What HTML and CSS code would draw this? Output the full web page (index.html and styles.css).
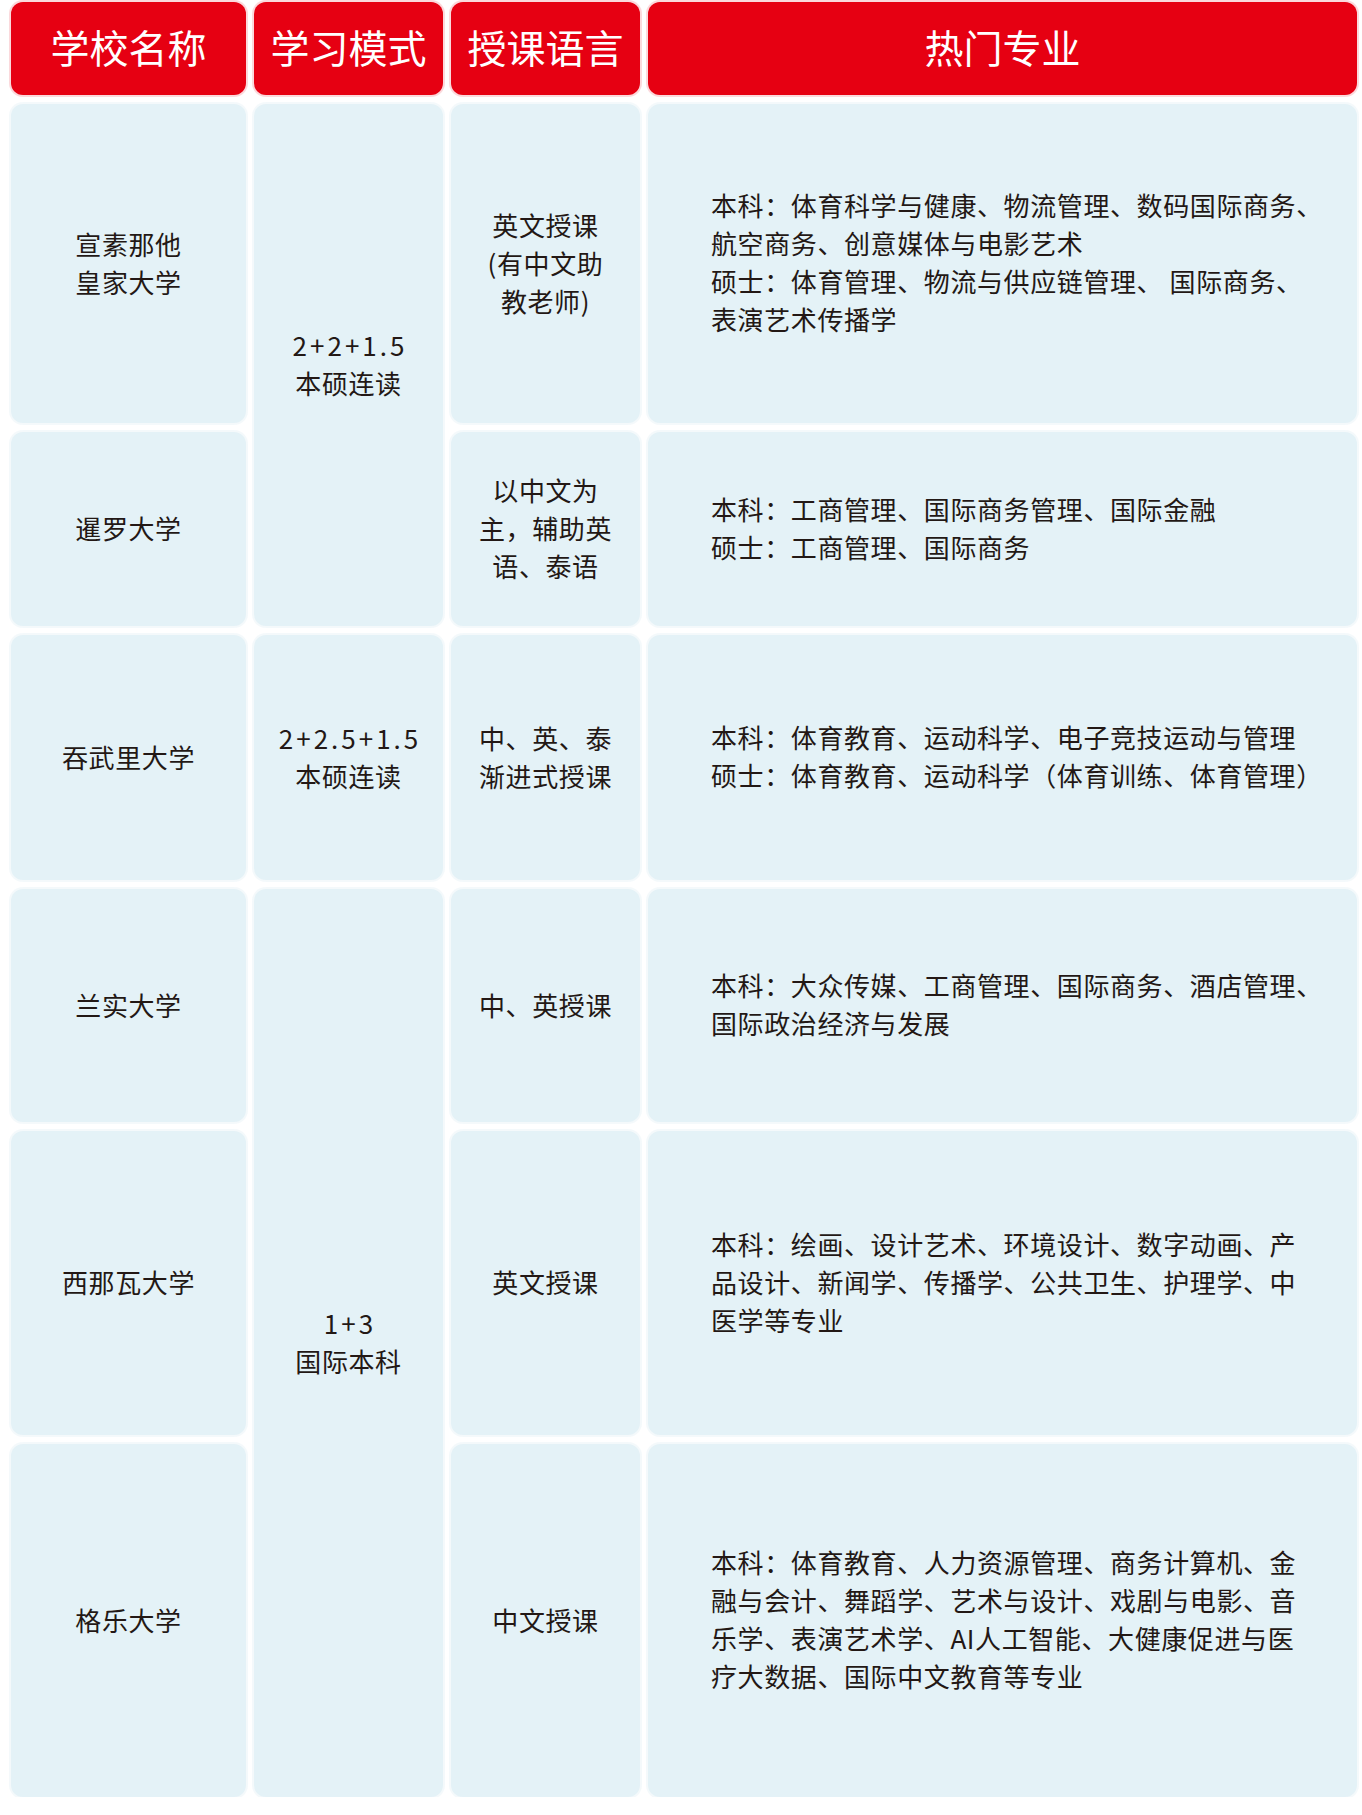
FILE: index.html
```html
<!DOCTYPE html>
<html lang="zh-CN">
<head>
<meta charset="utf-8">
<title>热门院校</title>
<link rel="stylesheet" href="styles.css">
</head>
<body>
<div class="table">
  <div class="cell head"><div>学校名称</div></div>
  <div class="cell head"><div>学习模式</div></div>
  <div class="cell head"><div>授课语言</div></div>
  <div class="cell head"><div>热门专业</div></div>

  <div class="cell c r1"><div>宣素那他<br>皇家大学</div></div>
  <div class="cell c r1-2"><div><span class="num">2+2+1.5</span><br>本硕连读</div></div>
  <div class="cell c r1"><div>英文授课<br>(有中文助<br>教老师)</div></div>
  <div class="cell l r1"><div>本科：体育科学与健康、物流管理、数码国际商务、<br>航空商务、创意媒体与电影艺术<br>硕士：体育管理、物流与供应链管理、 国际商务、<br>表演艺术传播学</div></div>

  <div class="cell c r2"><div>暹罗大学</div></div>
  <div class="cell c r2"><div>以中文为<br>主，辅助英<br>语、泰语</div></div>
  <div class="cell l r2"><div>本科：工商管理、国际商务管理、国际金融<br>硕士：工商管理、国际商务</div></div>

  <div class="cell c r3"><div>吞武里大学</div></div>
  <div class="cell c r3"><div><span class="num">2+2.5+1.5</span><br>本硕连读</div></div>
  <div class="cell c r3"><div>中、英、泰<br>渐进式授课</div></div>
  <div class="cell l r3"><div>本科：体育教育、运动科学、电子竞技运动与管理<br>硕士：体育教育、运动科学（体育训练、体育管理）</div></div>

  <div class="cell c r4"><div>兰实大学</div></div>
  <div class="cell c r4-6"><div><span class="num">1+3</span><br>国际本科</div></div>
  <div class="cell c r4"><div>中、英授课</div></div>
  <div class="cell l r4"><div>本科：大众传媒、工商管理、国际商务、酒店管理、<br>国际政治经济与发展</div></div>

  <div class="cell c r5"><div>西那瓦大学</div></div>
  <div class="cell c r5"><div>英文授课</div></div>
  <div class="cell l r5"><div>本科：绘画、设计艺术、环境设计、数字动画、产<br>品设计、新闻学、传播学、公共卫生、护理学、中<br>医学等专业</div></div>

  <div class="cell c r6"><div>格乐大学</div></div>
  <div class="cell c r6"><div>中文授课</div></div>
  <div class="cell l r6"><div>本科：体育教育、人力资源管理、商务计算机、金<br>融与会计、舞蹈学、艺术与设计、戏剧与电影、音<br>乐学、表演艺术学、AI人工智能、大健康促进与医<br>疗大数据、国际中文教育等专业</div></div>
</div>
</body>
</html>
```
FILE: styles.css
```css
html, body {
  margin: 0;
  padding: 0;
  background: #ffffff;
}
body {
  padding: 2px 0 0 11px;
  font-family: "Noto Sans CJK SC", "Noto Sans", sans-serif;
  color: #231815;
}
.table {
  display: grid;
  grid-template-columns: 235px 189px 189px 709px;
  grid-template-rows: 93px 319px 194px 245px 233px 304px 353px;
  column-gap: 8px;
  row-gap: 9px;
}
.cell {
  border-radius: 12px;
  background: #e4f2f7;
  box-shadow: 0 0 0 2px rgba(214, 234, 242, 0.28);
  display: flex;
  align-items: center;
  font-size: 26px;
  line-height: 38px;
  letter-spacing: 0.6px;
}
.head {
  background: #e60012;
  color: #ffffff;
  font-size: 39px;
  line-height: 46px;
  letter-spacing: 0;
  justify-content: center;
  padding-bottom: 6px;
  box-shadow: 0 0 0 2px rgba(240, 120, 130, 0.28);
}
.c {
  justify-content: center;
  text-align: center;
}
.l {
  justify-content: flex-start;
  text-align: left;
  padding-left: 63px;
  padding-bottom: 3px;
  white-space: nowrap;
}
.c > div {
  padding-bottom: 2px;
}
.num {
  letter-spacing: 3px;
  margin-right: -3px;
}
.r1 { grid-row: 2; }
.r2 { grid-row: 3; }
.r3 { grid-row: 4; }
.r4 { grid-row: 5; }
.r5 { grid-row: 6; }
.r6 { grid-row: 7; }
.r1-2 { grid-row: 2 / span 2; grid-column: 2; }
.r4-6 { grid-row: 5 / span 3; grid-column: 2; }
```
